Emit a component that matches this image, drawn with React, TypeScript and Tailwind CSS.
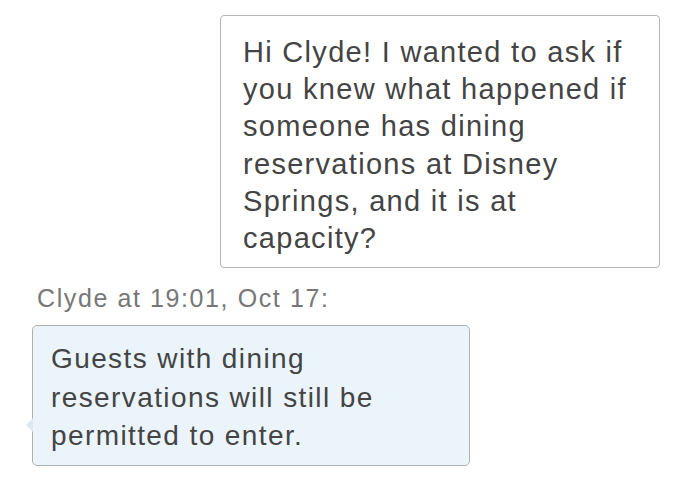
export default function App() {
  return (
    <div className="w-[700px] h-[490px] bg-white overflow-hidden font-['Liberation_Sans',Arial,sans-serif] text-[#444]">
      <div className="flex flex-col pt-[15px]">
        <div className="flex justify-end pr-[40px]">
          <div className="w-[440px] h-[253px] border border-[#b5b5b5] rounded-[4px] bg-white pl-[22px] pr-[10px] pt-[18px] text-[29px] leading-[37.2px] tracking-[1.3px]">
            Hi Clyde! I wanted to ask if you knew what happened if someone has dining reservations at Disney Springs, and it is at capacity?
          </div>
        </div>
        <div className="pl-[37px] mt-[15px] text-[25px] leading-[30px] tracking-[1.6px] text-[#777]">Clyde at 19:01, Oct 17:</div>
        <div className="pl-[32px] mt-[12px]">
          <div className="relative w-[438px] h-[141px] border border-[#b0b0b0] rounded-[5px] bg-[#ebf4fb] pl-[18px] pr-[16px] pt-[14px] text-[28px] leading-[38.5px] tracking-[1.4px]">
            <span className="absolute left-[-7px] top-[92px] w-0 h-0 border-y-[7px] border-y-transparent border-r-[7px] border-r-[#dfe8ef]" />
            Guests with dining reservations will still be permitted to enter.
          </div>
        </div>
      </div>
    </div>
  );
}
